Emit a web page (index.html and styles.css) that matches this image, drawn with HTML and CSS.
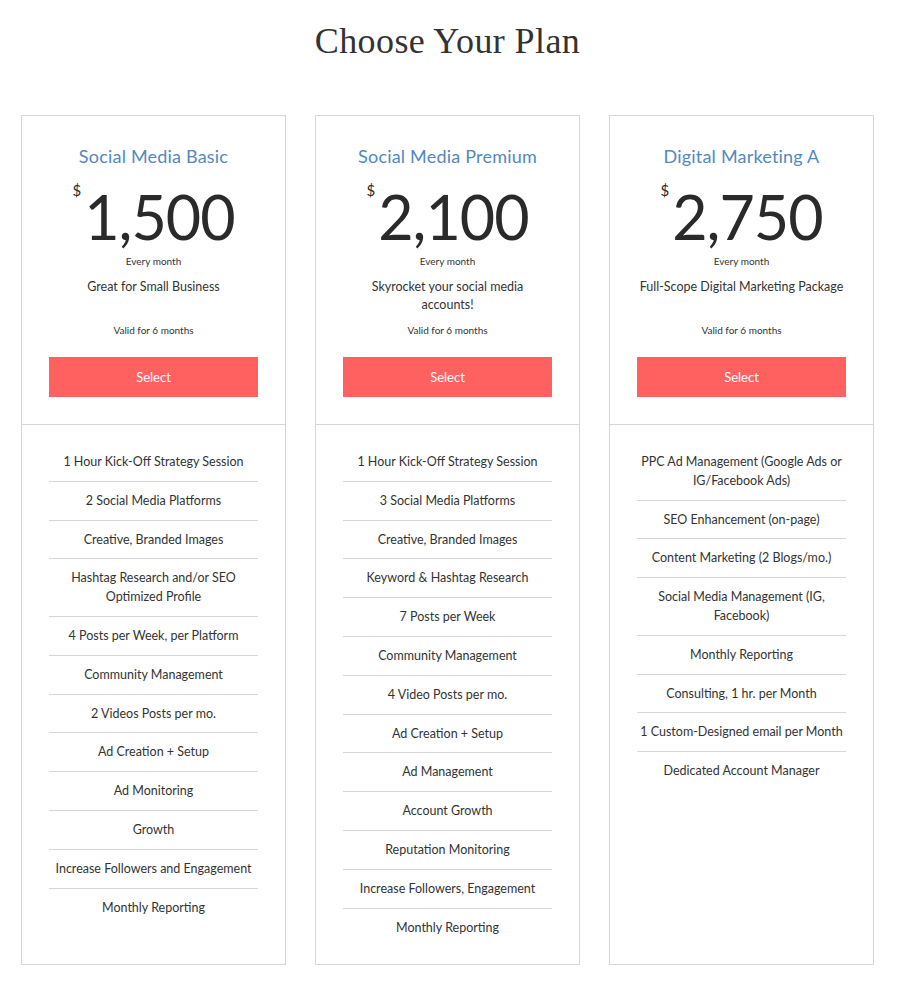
FILE: index.html
```html
<!DOCTYPE html>
<html lang="en">
<head>
<meta charset="utf-8">
<title>Choose Your Plan</title>
<link rel="stylesheet" href="styles.css">
</head>
<body>
<main class="page">
  <h1 class="page-title">Choose Your Plan</h1>
  <div class="plans">
    <section class="plan">
      <div class="plan-head">
        <h2 class="plan-name">Social Media Basic</h2>
        <div class="price"><span class="currency">$</span><span class="amount">1,500</span></div>
        <div class="period">Every month</div>
        <p class="tagline">Great for Small Business</p>
        <div class="valid">Valid for 6 months</div>
        <button class="select-btn">Select</button>
      </div>
      <ul class="features">
        <li>1 Hour Kick-Off Strategy Session</li>
        <li>2 Social Media Platforms</li>
        <li>Creative, Branded Images</li>
        <li>Hashtag Research and/or SEO Optimized Profile</li>
        <li>4 Posts per Week, per Platform</li>
        <li>Community Management</li>
        <li>2 Videos Posts per mo.</li>
        <li>Ad Creation + Setup</li>
        <li>Ad Monitoring</li>
        <li>Growth</li>
        <li>Increase Followers and Engagement</li>
        <li>Monthly Reporting</li>
      </ul>
    </section>
    <section class="plan">
      <div class="plan-head">
        <h2 class="plan-name">Social Media Premium</h2>
        <div class="price"><span class="currency">$</span><span class="amount">2,100</span></div>
        <div class="period">Every month</div>
        <p class="tagline">Skyrocket your social media<br>accounts!</p>
        <div class="valid">Valid for 6 months</div>
        <button class="select-btn">Select</button>
      </div>
      <ul class="features">
        <li>1 Hour Kick-Off Strategy Session</li>
        <li>3 Social Media Platforms</li>
        <li>Creative, Branded Images</li>
        <li>Keyword &amp; Hashtag Research</li>
        <li>7 Posts per Week</li>
        <li>Community Management</li>
        <li>4 Video Posts per mo.</li>
        <li>Ad Creation + Setup</li>
        <li>Ad Management</li>
        <li>Account Growth</li>
        <li>Reputation Monitoring</li>
        <li>Increase Followers, Engagement</li>
        <li>Monthly Reporting</li>
      </ul>
    </section>
    <section class="plan">
      <div class="plan-head">
        <h2 class="plan-name">Digital Marketing A</h2>
        <div class="price"><span class="currency">$</span><span class="amount">2,750</span></div>
        <div class="period">Every month</div>
        <p class="tagline">Full-Scope Digital Marketing Package</p>
        <div class="valid">Valid for 6 months</div>
        <button class="select-btn">Select</button>
      </div>
      <ul class="features">
        <li>PPC Ad Management (Google Ads or IG/Facebook Ads)</li>
        <li>SEO Enhancement (on-page)</li>
        <li>Content Marketing (2 Blogs/mo.)</li>
        <li>Social Media Management (IG, Facebook)</li>
        <li>Monthly Reporting</li>
        <li>Consulting, 1 hr. per Month</li>
        <li>1 Custom-Designed email per Month</li>
        <li>Dedicated Account Manager</li>
      </ul>
    </section>
  </div>
</main>
</body>
</html>
```

FILE: styles.css
```css
* { box-sizing: border-box; }

body {
  margin: 0;
  background: #ffffff;
  color: #333333;
  font-family: Lato, "Liberation Sans", sans-serif;
}

.page {
  padding: 18px 24px 17px 21px;
}

.page-title {
  margin: 0 0 51px;
  text-align: center;
  font-family: "Liberation Serif", serif;
  font-weight: 400;
  font-size: 36px;
  line-height: 46px;
  color: #333333;
  letter-spacing: 0.4px;
}

.plans {
  display: grid;
  grid-template-columns: repeat(3, 265px);
  column-gap: 29px;
  align-items: stretch;
}

.plan {
  border: 1px solid #d6d6d6;
  display: flex;
  flex-direction: column;
}

.plan-head {
  padding: 29px 27px 27px;
  border-bottom: 1px solid #d6d6d6;
  text-align: center;
  display: flex;
  flex-direction: column;
  align-items: center;
}

.plan-name {
  margin: 0;
  font-size: 18px;
  line-height: 22px;
  font-weight: 400;
  color: #5289c0;
  letter-spacing: 0.2px;
}

.price {
  display: flex;
  align-items: flex-start;
  justify-content: center;
  margin-top: 20px;
  height: 62px;
}

.currency {
  font-size: 15px;
  line-height: 15px;
  margin-top: -4px;
  margin-right: 3px;
  color: #2a2a2a;
}

.amount {
  font-size: 61px;
  line-height: 60px;
  font-weight: 400;
  color: #2a2a2a;
  letter-spacing: -1px;
}

.period {
  font-size: 10px;
  line-height: 14px;
  margin-top: 5px;
}

.tagline {
  margin: 10px 0 0;
  font-size: 12.5px;
  line-height: 18px;
  min-height: 36px;
}

.valid {
  margin-top: 8px;
  font-size: 10px;
  line-height: 16px;
}

.select-btn {
  margin-top: 19px;
  width: 100%;
  height: 40px;
  border: 0;
  background: #ff6161;
  color: #ffffff;
  font-family: inherit;
  font-size: 13px;
  cursor: pointer;
}

.features {
  list-style: none;
  margin: 0;
  padding: 18px 27px 18px;
  text-align: center;
}

.features li {
  font-size: 12.5px;
  line-height: 18.8px;
  padding: 10px 0 9px;
  border-bottom: 1px solid #d6d6d6;
}

.features li:last-child {
  border-bottom: 0;
}
```
